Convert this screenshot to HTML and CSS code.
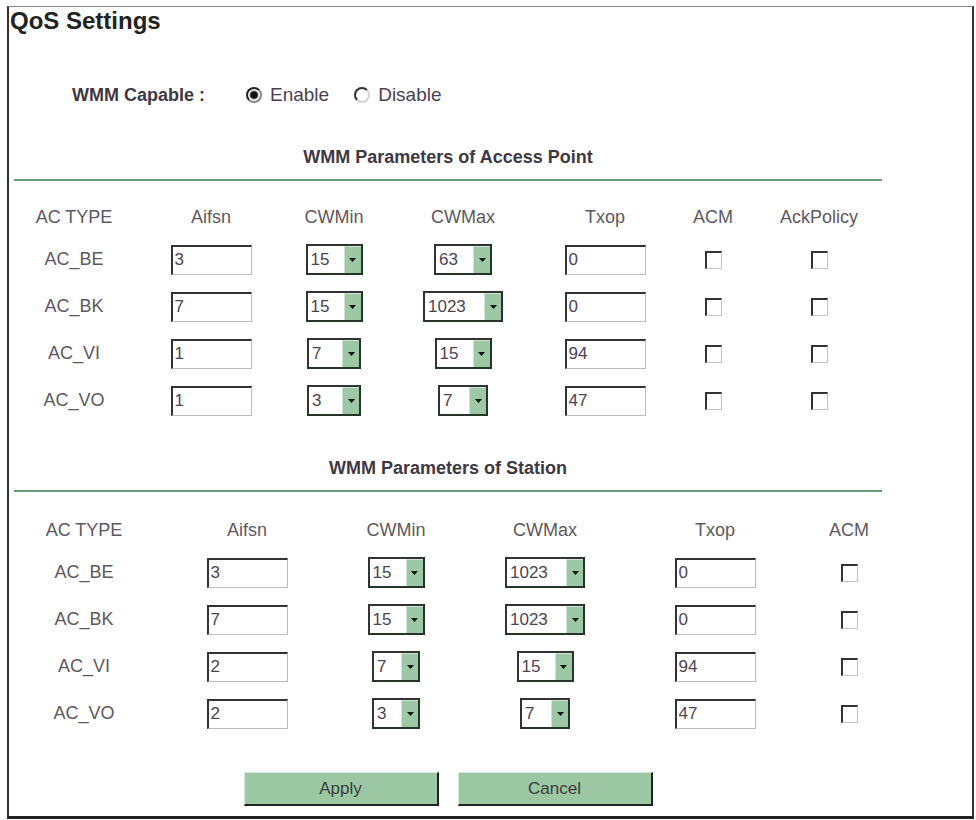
FILE: index.html
```html
<!DOCTYPE html>
<html lang="en">
<head>
    <meta charset="UTF-8">
    <meta name="viewport" content="width=device-width, initial-scale=1.0">
    <title>QoS Settings</title>
    <link rel="stylesheet" href="styles.css">
</head>
<body>

    <div class="panel">
        <h1 class="title">QoS Settings</h1>

        <form id="qosForm">
            <div class="wmm-row">
                <span class="wmm-label">WMM Capable :</span>
                <label class="opt"><input type="radio" name="wmm" value="1" checked>Enable</label>
                <label class="opt"><input type="radio" name="wmm" value="0">Disable</label>
            </div>

            <!-- Access point parameters -->
            <div class="section">
                <h2 class="section-title">WMM Parameters of Access Point</h2>
                <table class="params ap">
                    <colgroup>
                        <col class="c-type"><col class="c-aifsn"><col class="c-min"><col class="c-max"><col class="c-txop"><col class="c-acm"><col class="c-ack">
                    </colgroup>
                    <tr class="head">
                        <th>AC TYPE</th><th>Aifsn</th><th>CWMin</th><th>CWMax</th><th>Txop</th><th>ACM</th><th>AckPolicy</th>
                    </tr>
                    <tr>
                        <td>AC_BE</td>
                        <td><input class="num" type="text" value="3"></td>
                        <td><span class="dd w56"><select><option>15</option></select><span class="dd-btn"><svg width="7" height="4" viewBox="0 0 7 4"><path d="M0 0h7L3.5 4z"/></svg></span></span></td>
                        <td><span class="dd w58"><select><option>63</option></select><span class="dd-btn"><svg width="7" height="4" viewBox="0 0 7 4"><path d="M0 0h7L3.5 4z"/></svg></span></span></td>
                        <td><input class="num" type="text" value="0"></td>
                        <td><input class="chk" type="checkbox"></td>
                        <td><input class="chk" type="checkbox"></td>
                    </tr>
                    <tr>
                        <td>AC_BK</td>
                        <td><input class="num" type="text" value="7"></td>
                        <td><span class="dd w56"><select><option>15</option></select><span class="dd-btn"><svg width="7" height="4" viewBox="0 0 7 4"><path d="M0 0h7L3.5 4z"/></svg></span></span></td>
                        <td><span class="dd w80"><select><option>1023</option></select><span class="dd-btn"><svg width="7" height="4" viewBox="0 0 7 4"><path d="M0 0h7L3.5 4z"/></svg></span></span></td>
                        <td><input class="num" type="text" value="0"></td>
                        <td><input class="chk" type="checkbox"></td>
                        <td><input class="chk" type="checkbox"></td>
                    </tr>
                    <tr>
                        <td>AC_VI</td>
                        <td><input class="num" type="text" value="1"></td>
                        <td><span class="dd w54"><select><option>7</option></select><span class="dd-btn"><svg width="7" height="4" viewBox="0 0 7 4"><path d="M0 0h7L3.5 4z"/></svg></span></span></td>
                        <td><span class="dd w56"><select><option>15</option></select><span class="dd-btn"><svg width="7" height="4" viewBox="0 0 7 4"><path d="M0 0h7L3.5 4z"/></svg></span></span></td>
                        <td><input class="num" type="text" value="94"></td>
                        <td><input class="chk" type="checkbox"></td>
                        <td><input class="chk" type="checkbox"></td>
                    </tr>
                    <tr>
                        <td>AC_VO</td>
                        <td><input class="num" type="text" value="1"></td>
                        <td><span class="dd w54"><select><option>3</option></select><span class="dd-btn"><svg width="7" height="4" viewBox="0 0 7 4"><path d="M0 0h7L3.5 4z"/></svg></span></span></td>
                        <td><span class="dd w50"><select><option>7</option></select><span class="dd-btn"><svg width="7" height="4" viewBox="0 0 7 4"><path d="M0 0h7L3.5 4z"/></svg></span></span></td>
                        <td><input class="num" type="text" value="47"></td>
                        <td><input class="chk" type="checkbox"></td>
                        <td><input class="chk" type="checkbox"></td>
                    </tr>
                </table>
            </div>

            <!-- Station parameters -->
            <div class="section">
                <h2 class="section-title">WMM Parameters of Station</h2>
                <table class="params sta">
                    <colgroup>
                        <col class="c-type"><col class="c-aifsn"><col class="c-min"><col class="c-max"><col class="c-txop"><col class="c-acm">
                    </colgroup>
                    <tr class="head">
                        <th>AC TYPE</th><th>Aifsn</th><th>CWMin</th><th>CWMax</th><th>Txop</th><th>ACM</th>
                    </tr>
                    <tr>
                        <td>AC_BE</td>
                        <td><input class="num" type="text" value="3"></td>
                        <td><span class="dd w56"><select><option>15</option></select><span class="dd-btn"><svg width="7" height="4" viewBox="0 0 7 4"><path d="M0 0h7L3.5 4z"/></svg></span></span></td>
                        <td><span class="dd w80"><select><option>1023</option></select><span class="dd-btn"><svg width="7" height="4" viewBox="0 0 7 4"><path d="M0 0h7L3.5 4z"/></svg></span></span></td>
                        <td><input class="num" type="text" value="0"></td>
                        <td><input class="chk" type="checkbox"></td>
                    </tr>
                    <tr>
                        <td>AC_BK</td>
                        <td><input class="num" type="text" value="7"></td>
                        <td><span class="dd w56"><select><option>15</option></select><span class="dd-btn"><svg width="7" height="4" viewBox="0 0 7 4"><path d="M0 0h7L3.5 4z"/></svg></span></span></td>
                        <td><span class="dd w80"><select><option>1023</option></select><span class="dd-btn"><svg width="7" height="4" viewBox="0 0 7 4"><path d="M0 0h7L3.5 4z"/></svg></span></span></td>
                        <td><input class="num" type="text" value="0"></td>
                        <td><input class="chk" type="checkbox"></td>
                    </tr>
                    <tr>
                        <td>AC_VI</td>
                        <td><input class="num" type="text" value="2"></td>
                        <td><span class="dd w48"><select><option>7</option></select><span class="dd-btn"><svg width="7" height="4" viewBox="0 0 7 4"><path d="M0 0h7L3.5 4z"/></svg></span></span></td>
                        <td><span class="dd w56"><select><option>15</option></select><span class="dd-btn"><svg width="7" height="4" viewBox="0 0 7 4"><path d="M0 0h7L3.5 4z"/></svg></span></span></td>
                        <td><input class="num" type="text" value="94"></td>
                        <td><input class="chk" type="checkbox"></td>
                    </tr>
                    <tr>
                        <td>AC_VO</td>
                        <td><input class="num" type="text" value="2"></td>
                        <td><span class="dd w48"><select><option>3</option></select><span class="dd-btn"><svg width="7" height="4" viewBox="0 0 7 4"><path d="M0 0h7L3.5 4z"/></svg></span></span></td>
                        <td><span class="dd w50"><select><option>7</option></select><span class="dd-btn"><svg width="7" height="4" viewBox="0 0 7 4"><path d="M0 0h7L3.5 4z"/></svg></span></span></td>
                        <td><input class="num" type="text" value="47"></td>
                        <td><input class="chk" type="checkbox"></td>
                    </tr>
                </table>
            </div>

            <div class="actions">
                <button type="submit">Apply</button>
                <button type="button">Cancel</button>
            </div>
        </form>
    </div>

</body>
</html>
```

FILE: styles.css
```css
/* General Styles */
* {
    margin: 0;
    padding: 0;
    box-sizing: border-box;
}

body {
    font-family: 'Liberation Sans', Arial, sans-serif;
    background-color: #fff;
    color: #5e5862;
}

/* Outer frame */
.panel {
    margin: 6px 0 0 7px;
    width: 967px;
    height: 813px;
    border-style: solid;
    border-width: 1px 2px 3px 2px;
    border-color: #8a8a8a #333 #222 #333;
}

.title {
    font-size: 24px;
    line-height: 28px;
    font-weight: bold;
    color: #222;
    padding-left: 1px;
}

/* WMM on/off */
.wmm-row {
    display: flex;
    align-items: center;
    height: 30px;
    margin-top: 45px;
    padding-left: 63px;
}

.wmm-label {
    width: 174px;
    font-size: 18px;
    font-weight: bold;
    color: #3e3844;
}

.opt {
    display: flex;
    align-items: center;
    font-size: 19px;
    color: #4a3f52;
}

.opt + .opt {
    margin-left: 25px;
}

.opt input[type="radio"] {
    appearance: none;
    width: 16px;
    height: 16px;
    margin-right: 8px;
    border-radius: 50%;
    border: 2px solid;
    border-color: #333 #d4d4d4 #d4d4d4 #333;
    background: #fff;
}

.opt input[type="radio"]:checked {
    background: radial-gradient(circle, #111 0 3px, #777 4px, #fff 5px);
    border-color: #222 #888 #888 #222;
}

/* Parameter blocks */
.section,
.actions {
    margin-left: 5px;
    width: 868px;
}

.section + .section .section-title {
    margin-top: 32px;
}

.section-title {
    margin-top: 35px;
    padding-bottom: 10px;
    border-bottom: 2px solid #6b9a7a;
    text-align: center;
    font-size: 18px;
    line-height: 24px;
    font-weight: bold;
    color: #3e3844;
}

.params {
    table-layout: fixed;
    border-collapse: collapse;
    margin-top: 17px;
}

.params.sta {
    width: 892px;
    margin-top: 19px;
}

.params.ap {
    width: 862px;
}

.params th,
.params td {
    padding: 0;
    text-align: center;
    vertical-align: middle;
    font-size: 18px;
    font-weight: normal;
    color: #5e5862;
}

.params .head th {
    height: 38px;
}

.params td {
    height: 47px;
}

/* column widths */
.ap .c-type { width: 120px; }
.ap .c-aifsn { width: 154px; }
.ap .c-min { width: 92px; }
.ap .c-max { width: 166px; }
.ap .c-txop { width: 118px; }
.ap .c-acm { width: 98px; }
.ap .c-ack { width: 114px; }

.sta .c-type { width: 140px; }
.sta .c-aifsn { width: 186px; }
.sta .c-min { width: 112px; }
.sta .c-max { width: 186px; }
.sta .c-txop { width: 154px; }
.sta .c-acm { width: 114px; }

/* Text fields */
.num {
    width: 81px;
    height: 30px;
    padding-left: 2px;
    border-style: solid;
    border-width: 2px 1px 1px 2px;
    border-color: #333 #bdbdbd #bdbdbd #333;
    font-family: inherit;
    font-size: 17px;
    color: #4e4452;
    background: #fff;
    vertical-align: middle;
}

/* Drop-downs */
.dd {
    display: inline-flex;
    height: 31px;
    border: 2px solid;
    border-color: #333 #26352a #26352a #333;
    background: #fff;
    vertical-align: middle;
}

.dd select {
    appearance: none;
    flex: 1;
    min-width: 0;
    border: none;
    background: transparent;
    padding-left: 3px;
    font-family: inherit;
    font-size: 17px;
    color: #4e4452;
}

.dd-btn {
    display: flex;
    align-items: center;
    justify-content: center;
    width: 17px;
    background: #9dc8a5;
    border-left: 1px solid #cfe4d3;
    border-top: 1px solid #cfe4d3;
}

.dd-btn path {
    fill: #111;
}

.w48 { width: 48px; }
.w50 { width: 50px; }
.w54 { width: 54px; }
.w56 { width: 57px; }
.w58 { width: 58px; }
.w80 { width: 80px; }

/* Checkboxes */
.chk {
    appearance: none;
    width: 17px;
    height: 18px;
    border-style: solid;
    border-width: 2px 1px 1px 2px;
    border-color: #333 #c4c4c4 #c4c4c4 #333;
    background: #fff;
    vertical-align: middle;
}

/* Buttons */
.actions {
    display: flex;
    justify-content: center;
    gap: 19px;
    margin-top: 35px;
}

.actions button {
    width: 195px;
    height: 34px;
    background-color: #9cc7a3;
    border-style: solid;
    border-width: 1px 2px 2px 1px;
    border-color: #d8eadb #222 #222 #d8eadb;
    font-family: inherit;
    font-size: 17px;
    color: #3e3a40;
    cursor: pointer;
}

.actions button:hover {
    background-color: #8fbe97;
}
```
